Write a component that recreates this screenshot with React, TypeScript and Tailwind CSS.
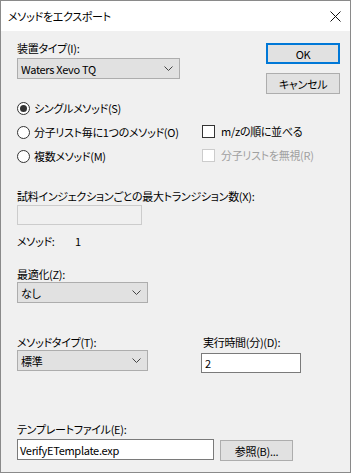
import React from "react";

const font = {
  fontFamily: '"Noto Sans CJK JP", "Noto Sans", sans-serif',
};

function Chevron() {
  return (
    <svg width="9" height="5" viewBox="0 0 9 5" className="shrink-0">
      <polyline points="0.5,0.5 4.5,4.5 8.5,0.5" fill="none" stroke="#444" strokeWidth="1" />
    </svg>
  );
}

function Combo({ value, w }: { value: string; w: string }) {
  return (
    <div className={`${w} h-[21px] border border-[#adadad] bg-[#e1e1e1] flex items-center justify-between pl-[3px] pr-[6px]`}>
      <span>{value}</span>
      <Chevron />
    </div>
  );
}

function Radio({ checked }: { checked?: boolean }) {
  return (
    <div className="w-[13px] h-[13px] rounded-full border border-[#333] bg-white flex items-center justify-center shrink-0">
      {checked && <div className="w-[7px] h-[7px] rounded-full bg-[#333]" />}
    </div>
  );
}

function Check({ disabled }: { disabled?: boolean }) {
  return (
    <div className={`w-[13px] h-[13px] border bg-white shrink-0 ${disabled ? "border-[#cccccc]" : "border-[#333]"}`} />
  );
}

export default function App() {
  return (
    <div
      className="w-[351px] h-[473px] border border-[#8a8a8a] flex flex-col text-[11px] leading-[16px] tracking-[-0.3px] text-black [font-feature-settings:'palt']"
      style={font}
    >
      <div className="h-[30px] bg-white flex items-center justify-between pl-[7px] pr-[8px] shrink-0">
        <span>メソッドをエクスポート</span>
        <svg width="11" height="11" viewBox="0 0 11 11" className="mr-[1px]">
          <line x1="0.5" y1="0.5" x2="10.5" y2="10.5" stroke="#111" strokeWidth="1" />
          <line x1="10.5" y1="0.5" x2="0.5" y2="10.5" stroke="#111" strokeWidth="1" />
        </svg>
      </div>
      <div className="flex-1 bg-[#f0f0f0] pl-[16px] pr-[10px] pt-[9px] flex flex-col">
        <div className="flex justify-between items-start">
          <div className="flex flex-col">
            <span>装置タイプ(I):</span>
            <div className="mt-[2px]">
              <Combo value="Waters Xevo TQ" w="w-[163px]" />
            </div>
          </div>
          <div className="flex flex-col pt-[3px] gap-[9px]">
            <div className="w-[74px] h-[21px] border-2 border-[#0078d7] bg-[#e1e1e1] flex items-center justify-center">OK</div>
            <div className="w-[74px] h-[21px] border border-[#adadad] bg-[#e1e1e1] flex items-center justify-center">キャンセル</div>
          </div>
        </div>

        <div className="mt-[2px] flex flex-col">
          <div className="h-[24px] flex items-center">
            <div className="w-[185px] flex items-center gap-[4px]">
              <Radio checked />
              <span>シングルメソッド(S)</span>
            </div>
          </div>
          <div className="h-[24px] flex items-center">
            <div className="w-[185px] flex items-center gap-[4px]">
              <Radio />
              <span>分子リスト毎に1つのメソッド(O)</span>
            </div>
            <div className="flex items-center gap-[6px] -mt-[2px]">
              <Check />
              <span>m/zの順に並べる</span>
            </div>
          </div>
          <div className="h-[24px] flex items-center">
            <div className="w-[185px] flex items-center gap-[4px]">
              <Radio />
              <span>複数メソッド(M)</span>
            </div>
            <div className="flex items-center gap-[6px] -mt-[2px] text-[#a0a0a0]">
              <Check disabled />
              <span>分子リストを無視(R)</span>
            </div>
          </div>
        </div>

        <span className="mt-[20px]">試料インジェクションごとの最大トランジション数(X):</span>
        <div className="mt-[1px] w-[125px] h-[20px] border border-[#cccccc] bg-[#f0f0f0]" />
        <div className="mt-[8px] flex">
          <span className="w-[58px]">メソッド:</span>
          <span>1</span>
        </div>

        <span className="mt-[17px]">最適化(Z):</span>
        <div>
          <Combo value="なし" w="w-[131px]" />
        </div>

        <div className="mt-[31px] flex">
          <div className="w-[184px] flex flex-col">
            <span>メソッドタイプ(T):</span>
            <Combo value="標準" w="w-[131px]" />
          </div>
          <div className="flex flex-col">
            <span className="ml-[2px]">実行時間(分)(D):</span>
            <div className="mt-[3px] w-[100px] h-[20px] border border-[#7a7a7a] bg-white flex items-center pl-[3px]">2</div>
          </div>
        </div>

        <span className="mt-[48px]">テンプレートファイル(E):</span>
        <div className="mt-[2px] flex items-start gap-[6px]">
          <div className="w-[197px] h-[21px] border border-[#7a7a7a] bg-white flex items-center pl-[2px]">VerifyETemplate.exp</div>
          <div className="mt-[1px] w-[73px] h-[21px] border border-[#adadad] bg-[#e1e1e1] flex items-center justify-center">参照(B)...</div>
        </div>
      </div>
    </div>
  );
}
